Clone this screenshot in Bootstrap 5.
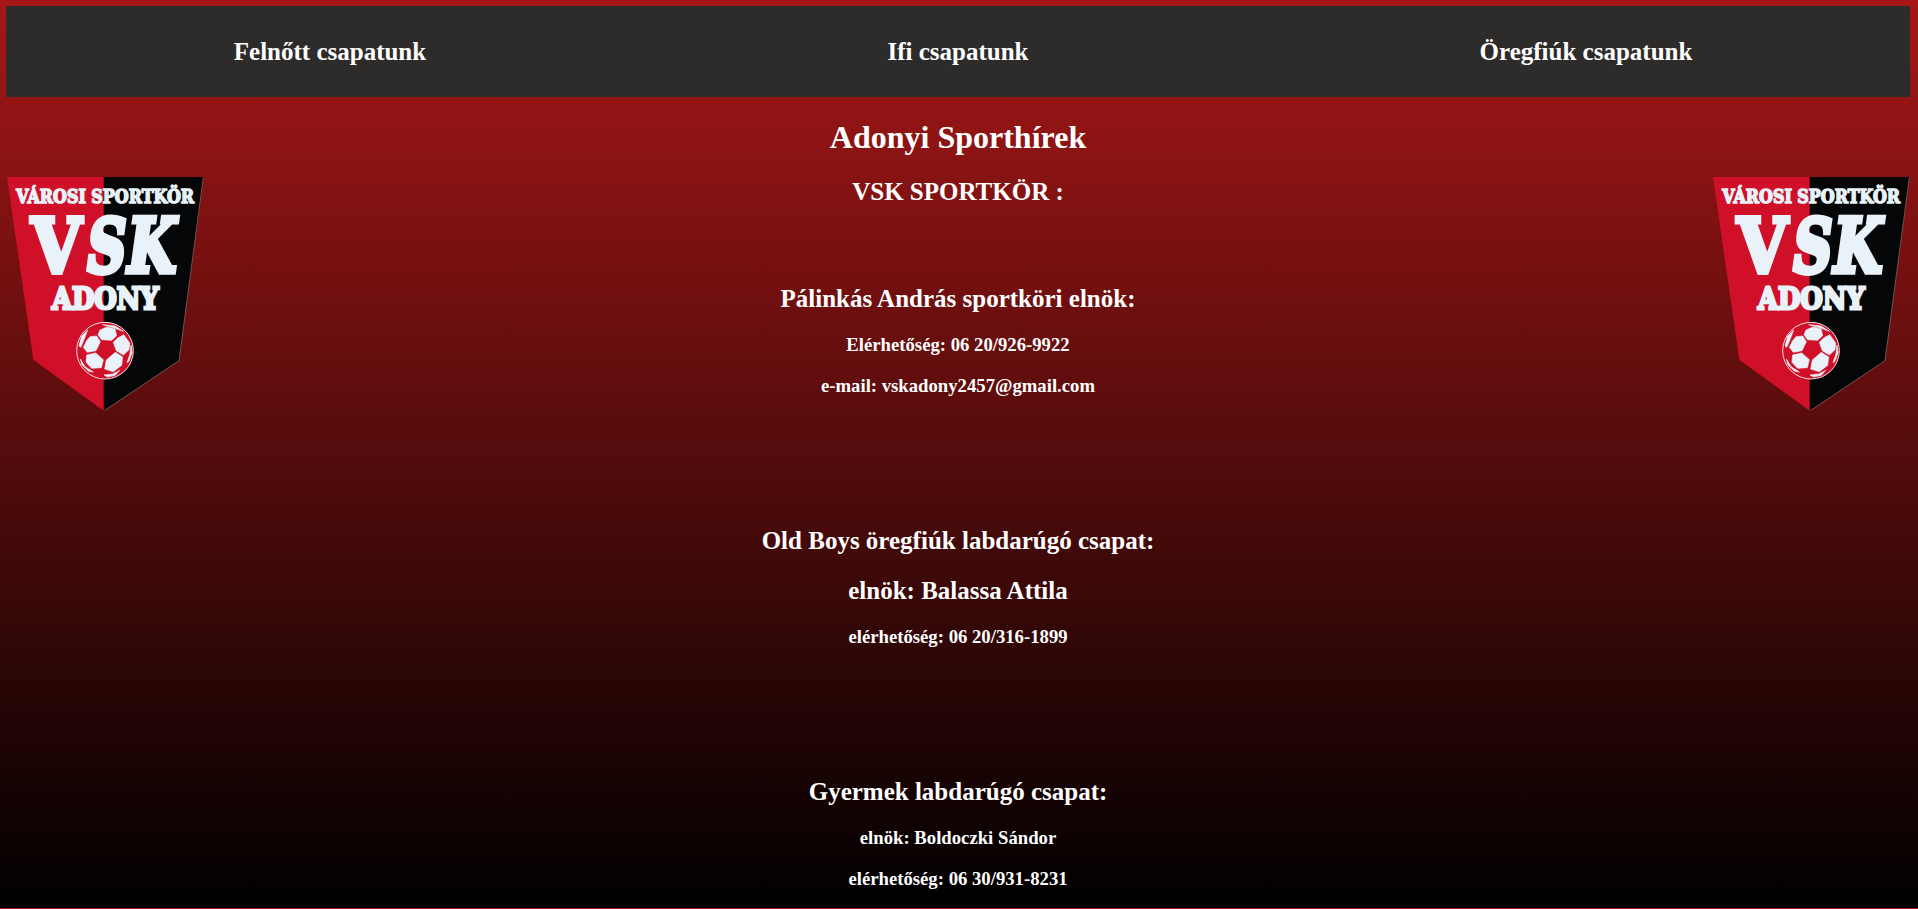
<!DOCTYPE html>
<html lang="hu">
<head>
<meta charset="utf-8">
<meta name="viewport" content="width=device-width, initial-scale=1">
<title>Adonyi Sporthírek</title>
<link href="https://cdn.jsdelivr.net/npm/bootstrap@5.3.0/dist/css/bootstrap.min.css" rel="stylesheet">
<style>
  html { background: #a71717; }
  body {
    height: 908px;
    padding: 6px 8px 0 6px;
    color: #fff;
    background: linear-gradient(#a71717, #000);
    background-size: 100% 908px;
    font-family: "Liberation Serif", "Times New Roman", serif;
    overflow: hidden;
  }
  .team-nav { background: #2e2c2b; height: 91px; padding: 0 10px; }
  .team-nav a { color: #fff; font-size: 25px; line-height: 27px; }
  h1, h2, h3 { font-weight: 700; margin: 0; }
  h1 { font-size: 32px; line-height: 36px; }
  h2 { font-size: 25px; line-height: 27px; }
  h3 { font-size: 18.72px; line-height: 21px; }
  .news { padding-top: 22px; }
  .club { gap: 23px; }
  .contact { gap: 22px; }
  .contact h3 + h3 { margin-top: -2px; }
  .chair { margin-top: 80px; }
  .squad { margin-top: 131px; }
  .crest { width: 198px; height: 234px; margin-top: 80px; overflow: visible; }
  .crest text { font-family: "DejaVu Serif", serif; font-weight: 700; fill: #e9f2f8; stroke: #e9f2f8; stroke-miterlimit: 2; }
</style>
</head>
<body>
<nav class="team-nav row g-0 align-items-center text-center fw-bold">
  <a class="col text-decoration-none" href="#">Felnőtt csapatunk</a>
  <a class="col text-decoration-none" href="#">Ifi csapatunk</a>
  <a class="col text-decoration-none" href="#">Öregfiúk csapatunk</a>
</nav>
<main class="d-flex justify-content-between align-items-start">
  <svg class="crest flex-shrink-0" viewBox="18 36 594 702" role="img" aria-label="VSK Adony">
    <g id="crest-art">
      <path d="M21 36H312V738L100 584Z" fill="#d01028"/>
      <path d="M311 36H611L537 587L311 738Z" fill="#040607"/>
      <path d="M610 37L537 587L313 737" fill="none" stroke="#b99" stroke-width="1.5"/>
      <text x="49" y="115" font-size="53" stroke-width="4.5" textLength="533" lengthAdjust="spacingAndGlyphs">VÁROSI SPORTKÖR</text>
      <text x="94" y="322" font-size="225" stroke-width="15" textLength="151" lengthAdjust="spacingAndGlyphs">V</text>
      <g transform="translate(0 322) skewX(-8)">
        <text x="251" y="0" font-size="221" stroke-width="17" textLength="117" lengthAdjust="spacingAndGlyphs">S</text>
        <text x="372" y="0" font-size="225" stroke-width="16" textLength="145" lengthAdjust="spacingAndGlyphs">K</text>
      </g>
      <text x="156" y="433" font-size="92" stroke-width="9" textLength="320" lengthAdjust="spacingAndGlyphs">ADONY</text>
      <g transform="translate(210 459)">
        <circle cx="105" cy="98" r="85" fill="#d01028" stroke="#f4dfe2" stroke-width="3"/>
        <g fill="#e9f2f8" stroke="#e9f2f8" stroke-width="2" stroke-linejoin="round">
          <path d="M90 36L111 27L135 33L140 53L125 67L95 65L84 50Z"/>
          <path d="M50 68L60 56L80 54L91 71L78 98L52 103L40 88Z"/>
          <path d="M143 60L161 50L179 75L177 95L160 111L139 98L130 73Z"/>
          <path d="M50 111L77 105L100 125L94 149L65 151L48 133Z"/>
          <path d="M109 126L136 103L158 117L155 142L130 161L104 153Z"/>
          <path d="M27 84L35 54L53 36L42 65L32 88Z"/>
          <path d="M98 20L135 24L160 40L133 30Z"/>
          <path d="M183 81L186 104L177 130L171 134L180 108Z"/>
          <path d="M31 123L45 146L70 162L56 160L36 141Z"/>
          <path d="M102 171L129 168L149 157L136 172L113 177Z"/>
        </g>
      </g>
    </g>
  </svg>
  <section class="news text-center">
    <div class="club d-flex flex-column">
      <h1>Adonyi Sporthírek</h1>
      <h2>VSK SPORTKÖR :</h2>
    </div>
    <div class="contact chair d-flex flex-column">
      <h2>Pálinkás András sportköri elnök:</h2>
      <h3>Elérhetőség: 06 20/926-9922</h3>
      <h3>e-mail: vskadony2457@gmail.com</h3>
    </div>
    <div class="contact squad d-flex flex-column">
      <div class="club d-flex flex-column">
        <h2>Old Boys öregfiúk labdarúgó csapat:</h2>
        <h2>elnök: Balassa Attila</h2>
      </div>
      <h3>elérhetőség: 06 20/316-1899</h3>
    </div>
    <div class="contact squad d-flex flex-column">
      <h2>Gyermek labdarúgó csapat:</h2>
      <h3>elnök: Boldoczki Sándor</h3>
      <h3>elérhetőség: 06 30/931-8231</h3>
    </div>
  </section>
  <svg class="crest flex-shrink-0" viewBox="18 36 594 702" role="img" aria-label="VSK Adony"><use href="#crest-art"/></svg>
</main>
<script src="https://cdn.jsdelivr.net/npm/bootstrap@5.3.0/dist/js/bootstrap.bundle.min.js"></script>
</body>
</html>
